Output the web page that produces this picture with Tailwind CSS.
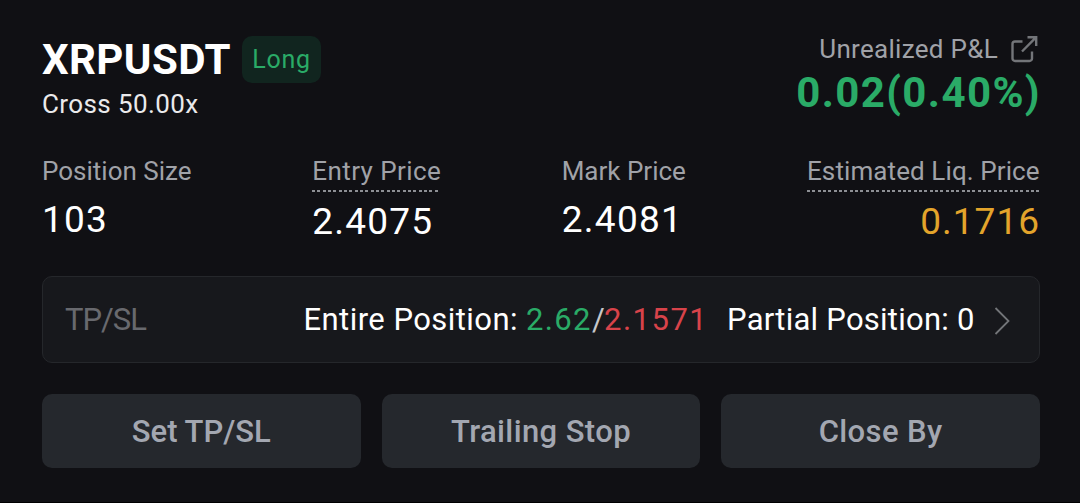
<!DOCTYPE html>
<html lang="en">

<head>
  <meta charset="UTF-8">
  <meta name="viewport" content="width=device-width, initial-scale=1.0">
  <title>XRPUSDT Position</title>
  <script src="https://cdn.jsdelivr.net/npm/@tailwindcss/browser@4"></script>
</head>

<body class="bg-[#101014] font-['Roboto',sans-serif] text-white">
  <div class="w-[1080px] h-[503px] pt-[31px] pl-[42px] pr-10 border-b border-black overflow-hidden">

    <!-- Symbol and P&L -->
    <div class="flex justify-between h-[122px]">
      <div class="pt-[5px]">
        <div class="flex items-center gap-3 h-[47px]">
          <h1 class="w-[188px] text-[42px] leading-[48px] font-bold tracking-[0.4px] whitespace-nowrap">XRPUSDT</h1>
          <span class="w-[79px] h-[47px] rounded-[10px] bg-[#11251f] text-[#2aab67] text-[25px] leading-[47px] text-center tracking-[0.7px]">Long</span>
        </div>
        <div class="mt-[3px] text-[26px] leading-9 tracking-[0.4px] text-[#eaeaec]">Cross 50.00x</div>
      </div>
      <div class="flex flex-col items-end">
        <div class="flex items-center text-[26px] leading-9 tracking-[0.3px] text-[#a0a2a8]">
          <span>Unrealized P&amp;L</span>
          <svg class="w-[30px] h-7 ml-3" viewBox="0 0 30 28" fill="none" stroke="#737579" stroke-width="2.4">
            <path d="M12.500 6.500H5A2.500 2.500 0 0 0 2.500 9V23.500A2.500 2.500 0 0 0 5 26H19.500A2.500 2.500 0 0 0 22 23.500V16.500" />
            <path d="M17.500 2.200H26.200V11M26.200 2.200L12 16.500" />
          </svg>
        </div>
        <div class="mt-[2px] -mr-[1px] text-[42px] leading-[48px] font-bold tracking-[1.4px] text-[#2aab67]">0.02(0.40%)</div>
      </div>
    </div>

    <!-- Stats -->
    <div class="flex justify-between h-[123px] text-[26px] leading-9 text-[#a0a2a8] whitespace-nowrap">
      <div class="w-[149px]">
        <div>Position Size</div>
        <div class="mt-[9px] text-[37px] leading-[44px] tracking-[1.2px] text-white">103</div>
      </div>
      <div class="w-[128px]">
        <div class="h-[39px] tracking-[0.4px] bg-[repeating-linear-gradient(90deg,#8d8f94_0_3px,transparent_3px_5.33px)] bg-no-repeat bg-bottom bg-size-[100%_2px]">Entry Price</div>
        <div class="mt-2 text-[37px] leading-[44px] tracking-[1.2px] text-white">2.4075</div>
      </div>
      <div class="w-[124px]">
        <div>Mark Price</div>
        <div class="mt-[9px] text-[37px] leading-[44px] tracking-[1.3px] text-white">2.4081</div>
      </div>
      <div class="w-[233px]">
        <div class="h-[39px] tracking-[0.1px] bg-[repeating-linear-gradient(90deg,#8d8f94_0_3px,transparent_3px_5.33px)] bg-no-repeat bg-bottom bg-size-[100%_2px]">Estimated Liq. Price</div>
        <div class="mt-2 text-[37px] leading-[44px] tracking-[1px] text-right text-[#e3a42b]">0.1716</div>
      </div>
    </div>

    <!-- TP/SL -->
    <div class="flex items-center h-[87px] pl-[22px] pr-[29px] rounded-[10px] border border-[#25272b] bg-[#17181c] text-[31px] leading-[86px] whitespace-nowrap">
      <span class="text-[#68696e] tracking-[-1px]">TP/SL</span>
      <span class="ml-auto tracking-[0.45px]">Entire Position:</span>
      <span class="ml-2 w-[66px] tracking-[1.3px] text-[#2aab67]">2.62</span>
      <span class="w-[12px] text-[#c6c7ca]">/</span>
      <span class="w-[103px] tracking-[1.5px] text-[#d8434a]">2.1571</span>
      <span class="ml-5 w-[248px] tracking-[0.25px]">Partial Position: 0</span>
      <svg class="w-[16px] h-[28px] ml-[19px] mt-[3px]" viewBox="0 0 16 28" fill="none" stroke="#737579" stroke-width="1.8">
        <path d="M1.500 1L14.500 14L1.500 27" />
      </svg>
    </div>

    <!-- Actions -->
    <div class="grid grid-cols-3 gap-[21px] mt-[31px] text-[31px] leading-[73px] font-medium text-[#a3a7b1]">
      <button class="h-[74px] rounded-[10px] bg-[#25282d]">Set TP/SL</button>
      <button class="h-[74px] rounded-[10px] bg-[#25282d] tracking-[0.4px]">Trailing Stop</button>
      <button class="h-[74px] rounded-[10px] bg-[#25282d] tracking-[0.4px]">Close By</button>
    </div>
  </div>
</body>

</html>
